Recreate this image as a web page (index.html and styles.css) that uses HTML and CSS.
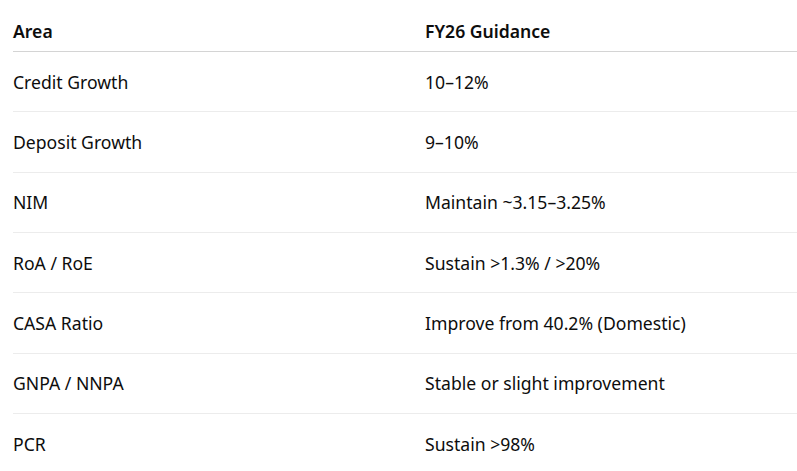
FILE: index.html
```html
<!DOCTYPE html>
<html lang="en">
<head>
<meta charset="utf-8">
<link rel="stylesheet" href="styles.css">
</head>
<body>
<div class="wrap">
<table class="guide">
  <thead>
    <tr><th class="c1">Area</th><th class="c2">FY26 Guidance</th></tr>
  </thead>
  <tbody>
    <tr><td class="c1">Credit Growth</td><td class="c2">10–12%</td></tr>
    <tr><td class="c1">Deposit Growth</td><td class="c2">9–10%</td></tr>
    <tr><td class="c1">NIM</td><td class="c2">Maintain ~3.15–3.25%</td></tr>
    <tr><td class="c1">RoA / RoE</td><td class="c2">Sustain &gt;1.3% / &gt;20%</td></tr>
    <tr><td class="c1">CASA Ratio</td><td class="c2">Improve from 40.2% (Domestic)</td></tr>
    <tr><td class="c1">GNPA / NNPA</td><td class="c2">Stable or slight improvement</td></tr>
    <tr><td class="c1">PCR</td><td class="c2">Sustain &gt;98%</td></tr>
  </tbody>
</table>
</div>
</body>
</html>
```

FILE: styles.css
```css
html, body {
  margin: 0;
  padding: 0;
  background: #ffffff;
}
body {
  font-family: "Noto Sans", "Open Sans", sans-serif;
  font-size: 17.6px;
  color: #0d0d0d;
}
.wrap {
  padding: 10px 0 0 13px;
}
.guide {
  width: 784px;
  border-collapse: collapse;
}
.guide th, .guide td {
  text-align: left;
  line-height: 24px;
  padding: 0;
}
.guide th {
  font-weight: 600;
  height: 41px;
  vertical-align: middle;
  border-bottom: 1px solid #d4d4d4;
}
.guide td {
  height: 59.33px;
  vertical-align: middle;
  border-bottom: 1px solid #ececec;
}
.guide tbody tr:last-child td {
  border-bottom: none;
}
.guide .c1 {
  width: 412px;
}
```
